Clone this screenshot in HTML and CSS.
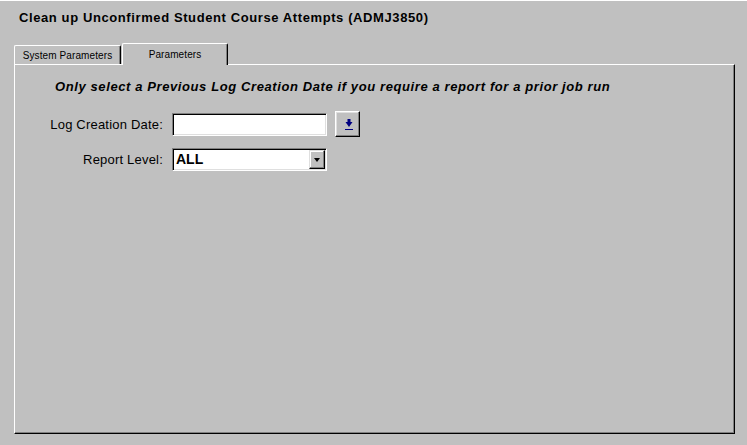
FILE: index.html
```html
<!DOCTYPE html>
<html lang="en">
<head>
    <meta charset="UTF-8">
    <title>ADMJ3850</title>
    <link rel="stylesheet" href="styles.css">
</head>
<body>
    <div class="title">Clean up Unconfirmed Student Course Attempts (ADMJ3850)</div>
    <div class="tabs">
        <div class="tab">System Parameters</div>
        <div class="tab current">Parameters</div>
    </div>
    <div class="panel">
        <div class="note">Only select a Previous Log Creation Date if you require a report for a prior job run</div>
        <div class="form">
            <label class="label">Log Creation Date:</label>
            <div class="field"></div>
            <div class="lookupBtn">
                <svg width="8" height="11" viewBox="0 0 8 11">
                    <rect x="2.5" y="0" width="3" height="3.5" fill="#000080"/>
                    <polygon points="0.5,3 7.5,3 4,8" fill="#000080"/>
                    <rect x="0" y="10" width="8" height="1" fill="#000080"/>
                </svg>
            </div>
            <label class="label">Report Level:</label>
            <div class="field combo">
                <span class="comboText">ALL</span>
                <span class="comboBtn"><i class="arrow"></i></span>
            </div>
        </div>
    </div>
</body>
</html>
```

FILE: styles.css
```css
*{
    margin:0;
    padding:0;
    box-sizing:border-box;
}
body{
    background:#c0c0c0;
    border-top:1px solid #fff;
    font-family:"Liberation Sans", Arial, sans-serif;
    color:#000;
}
.title{
    padding:9px 0 0 19px;
    font-size:13px;
    font-weight:bold;
    letter-spacing:0.6px;
    line-height:16px;
}
.tabs{
    display:flex;
    align-items:flex-end;
    height:21px;
    margin:17px 0 0 14px;
    position:relative;
    z-index:1;
}
.tab{
    width:107px;
    height:19px;
    border-top:1px solid #fff;
    border-left:1px solid #fff;
    border-right:1px solid #000;
    border-radius:2px 2px 0 0;
    box-shadow:inset -1px 0 #808080;
    background:#c0c0c0;
    font-size:10px;
    letter-spacing:0.1px;
    line-height:19px;
    text-align:center;
}
.tab.current{
    width:106px;
    height:22px;
    margin-left:1px;
    margin-bottom:-1px;
    line-height:22px;
}
.panel{
    width:721px;
    height:370px;
    margin-left:14px;
    border:1px solid;
    border-color:#fff #000 #000 #fff;
    box-shadow:inset -1px -1px #808080;
}
.note{
    margin-top:14px;
    padding-left:40px;
    font-size:13px;
    font-weight:bold;
    font-style:italic;
    letter-spacing:0.6px;
    line-height:16px;
}
.form{
    display:grid;
    grid-template-columns:148px 155px 25px;
    column-gap:9px;
    row-gap:11px;
    align-items:center;
    margin-top:16px;
}
.label{
    font-size:13px;
    letter-spacing:0.2px;
    text-align:right;
}
.field{
    height:23px;
    background:#fff;
    border:1px solid;
    border-color:#808080 #fff #fff #808080;
    box-shadow:inset 1px 1px #000, inset -1px -1px #dfdfdf;
}
.lookupBtn{
    width:25px;
    height:26px;
    margin-left:-1px;
    display:flex;
    align-items:center;
    justify-content:center;
    border:1px solid;
    border-color:#fff #000 #000 #fff;
    box-shadow:inset -1px -1px #808080, inset 1px 1px #dfdfdf;
    padding-left:2px;
}
.combo{
    display:flex;
    align-items:stretch;
    padding:1px;
}
.comboText{
    flex:1;
    padding-left:2px;
    font-size:14px;
    font-weight:bold;
    line-height:19px;
}
.comboBtn{
    width:16px;
    display:flex;
    align-items:center;
    justify-content:center;
    background:#c0c0c0;
    border:1px solid;
    border-color:#dfdfdf #000 #000 #dfdfdf;
    box-shadow:inset -1px -1px #808080, inset 1px 1px #fff;
}
.arrow{
    width:0;
    height:0;
    border-left:3.5px solid transparent;
    border-right:3.5px solid transparent;
    border-top:4px solid #000;
    margin-top:1px;
}
```
